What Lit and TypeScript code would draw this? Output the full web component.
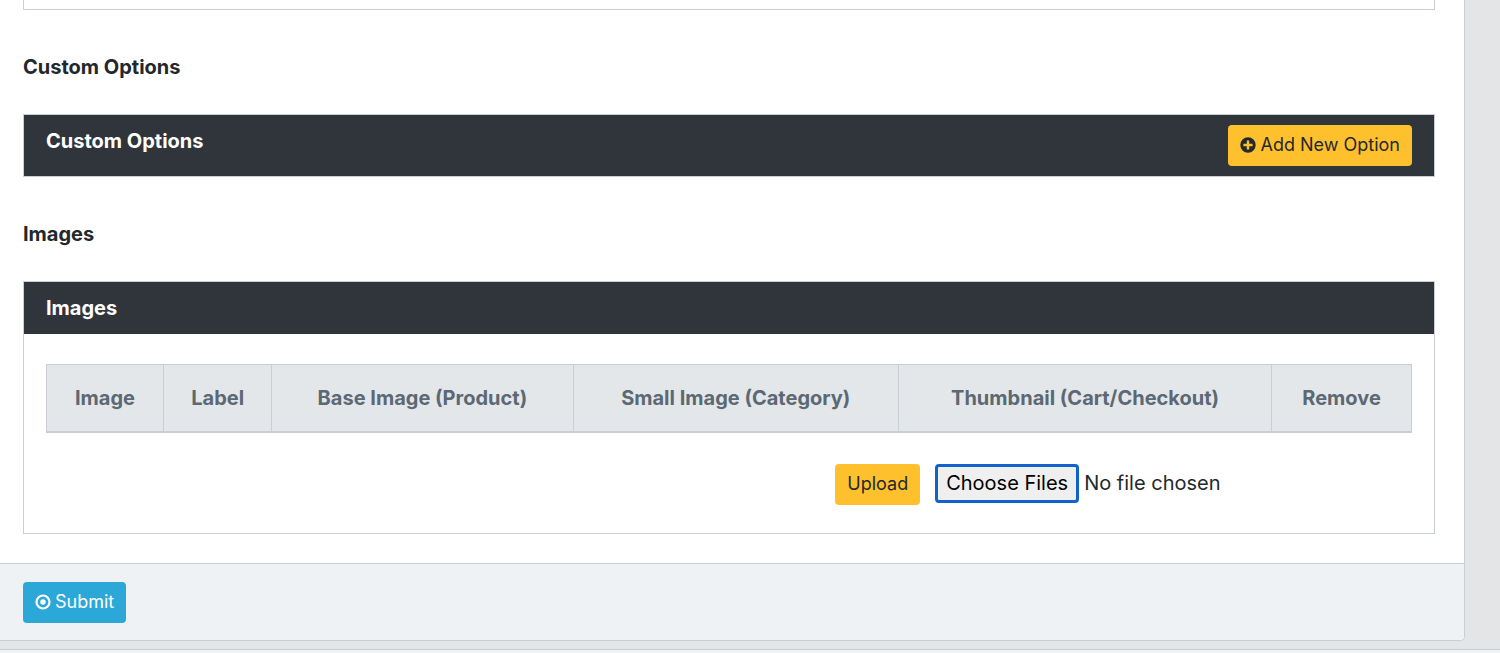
import { LitElement, html, css } from "lit";
import { customElement } from "lit/decorators.js";

const COLUMNS = [
  "Image",
  "Label",
  "Base Image (Product)",
  "Small Image (Category)",
  "Thumbnail (Cart/Checkout)",
  "Remove",
];

@customElement("app-root")
export class AppRoot extends LitElement {
  static styles = css`
    :host {
      display: block;
      min-height: 100vh;
      overflow: hidden;
      background: #e4e5e7;
      color: #23282c;
      font: 400 20px/30px Inter, "Open Sans", sans-serif;
    }
    *,
    *::before {
      box-sizing: border-box;
    }
    .page {
      display: flex;
      flex-direction: column;
      min-height: 100vh;
    }
    .card {
      margin-right: 35px;
      background: #fff;
      border: solid #c8ced3;
      border-width: 0 1px 1px 0;
      border-radius: 0 0 5px 0;
      overflow: hidden;
    }
    .card-body {
      padding: 0 29px 29px 23px;
    }
    .previous {
      height: 10px;
      border: 1px solid #c8ced3;
      border-top: 0;
    }
    .section-title {
      margin: 42px 0 32px;
      font-size: 20px;
      font-weight: 700;
      line-height: 30px;
    }
    .panel {
      border: 1px solid #c8ced3;
    }
    .panel-header {
      display: flex;
      justify-content: space-between;
      align-items: flex-start;
      padding: 10px 22px;
      background: #30343b;
      color: #fff;
    }
    .panel-title {
      font-weight: 700;
      line-height: 32px;
    }
    .panel-body {
      padding: 30px 22px 28px;
    }
    .btn {
      display: inline-flex;
      align-items: center;
      gap: 4px;
      height: 41px;
      padding: 0 12px 1px;
      border: 0;
      border-radius: 4px;
      font: 400 18px/28px Inter, "Open Sans", sans-serif;
      white-space: nowrap;
      cursor: pointer;
    }
    .warning {
      background: #ffc02e;
      color: #23282c;
    }
    .primary {
      background: #2ba8d8;
      color: #fff;
    }
    .icon {
      width: 16px;
      height: 16px;
      fill: currentColor;
    }
    .images {
      width: 100%;
      border-collapse: collapse;
      background: #e3e7ea;
      color: #5c6873;
    }
    .images th {
      padding: 18px 17px;
      border: 1px solid #c8ced3;
      border-bottom-width: 2px;
      font-weight: 700;
      text-align: center;
      white-space: nowrap;
    }
    .upload-row {
      display: grid;
      grid-template-columns: 11fr 6fr;
      column-gap: 15px;
      justify-items: end;
      margin-top: 31px;
    }
    .file {
      justify-self: stretch;
      min-width: 0;
      height: 39px;
      font: inherit;
      line-height: 39px;
      color: #23282c;
    }
    .file::file-selector-button {
      box-sizing: border-box;
      height: 39px;
      margin: 0 5px 0 0;
      padding: 0 8px;
      border: 3px solid #1262cc;
      border-radius: 4px;
      background: #efefef;
      color: #000;
      font: inherit;
      line-height: 33px;
    }
    .card-footer {
      display: flex;
      padding: 18px 23px 17px;
      border-top: 1px solid #c8ced3;
      background: #eef2f5;
    }
    .page-footer {
      flex: 1;
      margin-top: 8px;
      border-top: 1px solid #c8ced3;
      background: #eef2f5;
    }
  `;

  render() {
    return html`
      <div class="page">
        <form class="card" @submit=${(e: Event) => e.preventDefault()}>
          <div class="card-body">
            <div class="previous"></div>

            <h2 class="section-title">Custom Options</h2>
            <section class="panel">
              <header class="panel-header">
                <span class="panel-title">Custom Options</span>
                <button type="button" class="btn warning">
                  <svg class="icon" viewBox="0 0 16 16" aria-hidden="true">
                    <path
                      fill-rule="evenodd"
                      d="M8 .3a7.7 7.7 0 1 0 0 15.4A7.7 7.7 0 0 0 8 .3ZM6.8 3.4h2.4v3.4h3.4v2.4H9.2v3.4H6.8V9.2H3.4V6.8h3.4Z"
                    />
                  </svg>
                  Add New Option
                </button>
              </header>
            </section>

            <h2 class="section-title">Images</h2>
            <section class="panel">
              <header class="panel-header">
                <span class="panel-title">Images</span>
              </header>
              <div class="panel-body">
                <table class="images">
                  <thead>
                    <tr>
                      ${COLUMNS.map((c) => html`<th scope="col">${c}</th>`)}
                    </tr>
                  </thead>
                </table>
                <div class="upload-row">
                  <button type="button" class="btn warning">Upload</button>
                  <input class="file" type="file" multiple aria-label="Product images" />
                </div>
              </div>
            </section>
          </div>
          <footer class="card-footer">
            <button type="submit" class="btn primary">
              <svg class="icon" viewBox="0 0 16 16" aria-hidden="true">
                <circle cx="8" cy="8" r="6.5" fill="none" stroke="currentColor" stroke-width="2.2" />
                <circle cx="8" cy="8" r="2.7" />
              </svg>
              Submit
            </button>
          </footer>
        </form>
        <footer class="page-footer"></footer>
      </div>
    `;
  }
}
